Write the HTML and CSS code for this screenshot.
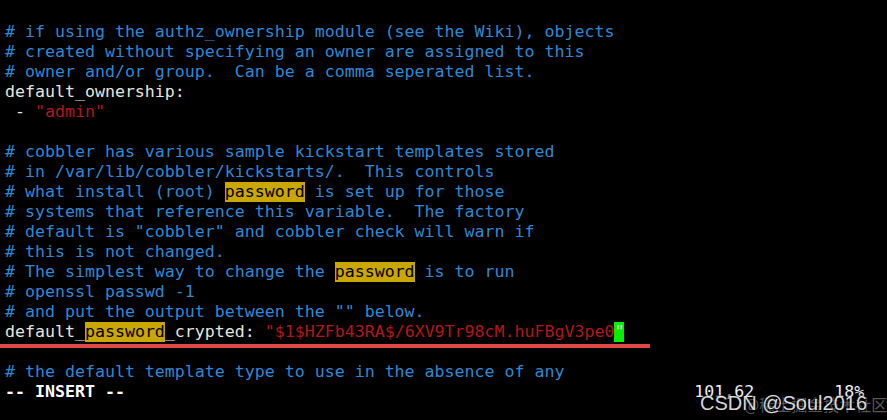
FILE: index.html
```html
<!DOCTYPE html>
<html>
<head>
<meta charset="utf-8">
<link rel="stylesheet" href="styles.css">
</head>
<body>
<div class="term">
<div class="ln c"># if using the authz_ownership module (see the Wiki), objects</div>
<div class="ln c"># created without specifying an owner are assigned to this</div>
<div class="ln c"># owner and/or group.  Can be a comma seperated list.</div>
<div class="ln">default_ownership:</div>
<div class="ln"> - <span class="s">"admin"</span></div>
<div class="ln"> </div>
<div class="ln c"># cobbler has various sample kickstart templates stored</div>
<div class="ln c"># in /var/lib/cobbler/kickstarts/.  This controls</div>
<div class="ln c"># what install (root) <span class="hl">password</span> is set up for those</div>
<div class="ln c"># systems that reference this variable.  The factory</div>
<div class="ln c"># default is "cobbler" and cobbler check will warn if</div>
<div class="ln c"># this is not changed.</div>
<div class="ln c"># The simplest way to change the <span class="hl">password</span> is to run</div>
<div class="ln c"># openssl passwd -1</div>
<div class="ln c"># and put the output between the "" below.</div>
<div class="ln">default_<span class="hl">password</span>_crypted: <span class="s">"$1$HZFb43RA$/6XV9Tr98cM.huFBgV3pe0</span><span class="cur">"</span></div>
<div class="ln mark"> <span class="underline"></span></div>
<div class="ln c"># the default template type to use in the absence of any</div>
<div class="ln status"><span class="mode">-- INSERT --</span>                                                         101,62        18%</div>
</div>
<div class="wm">
<span class="wm-cn">@稀土掘金技术社区</span>
<span class="wm-en">CSDN @Soul2016</span>
</div>
</body>
</html>
```

FILE: styles.css
```css
html, body {
  margin: 0;
  padding: 0;
  background: #000;
}
body {
  width: 887px;
  height: 420px;
  overflow: hidden;
  position: relative;
}
.term {
  padding: 22px 0 0 5px;
  font-family: "DejaVu Sans Mono", monospace;
  font-size: 16.6px;
  line-height: 20px;
  color: #e6e6da;
}
.ln {
  height: 20px;
  white-space: pre;
}
.c {
  color: #2f88d4;
}
.s {
  color: #b3161b;
}
.hl {
  display: inline-block;
  height: 20px;
  background: #c9a600;
  color: #000;
}
.cur {
  display: inline-block;
  height: 20px;
  background: #00f000;
  color: #d8d8d8;
}
.mark {
  position: relative;
}
.underline {
  position: absolute;
  left: -5px;
  top: 2px;
  width: 650px;
  height: 4px;
  background: #e04848;
}
.status {
  color: #eeeeee;
}
.mode {
  font-weight: bold;
  color: #fff;
}
.wm {
  position: absolute;
  left: 700px;
  top: 390px;
  width: 187px;
  height: 30px;
}
.wm-en {
  position: absolute;
  left: 0;
  top: 0;
  font-family: "Liberation Sans", Arial, sans-serif;
  font-size: 20px;
  line-height: 26px;
  color: rgba(255, 255, 255, 0.85);
  text-shadow: 1px 1px 1px rgba(0, 0, 0, 0.8), -1px -1px 1px rgba(0, 0, 0, 0.5);
  white-space: nowrap;
}
.wm-cn {
  position: absolute;
  left: 44px;
  top: 4px;
  font-family: "Noto Sans CJK SC", sans-serif;
  font-size: 16px;
  line-height: 20px;
  color: rgba(255, 255, 255, 0.35);
  white-space: nowrap;
}
```
